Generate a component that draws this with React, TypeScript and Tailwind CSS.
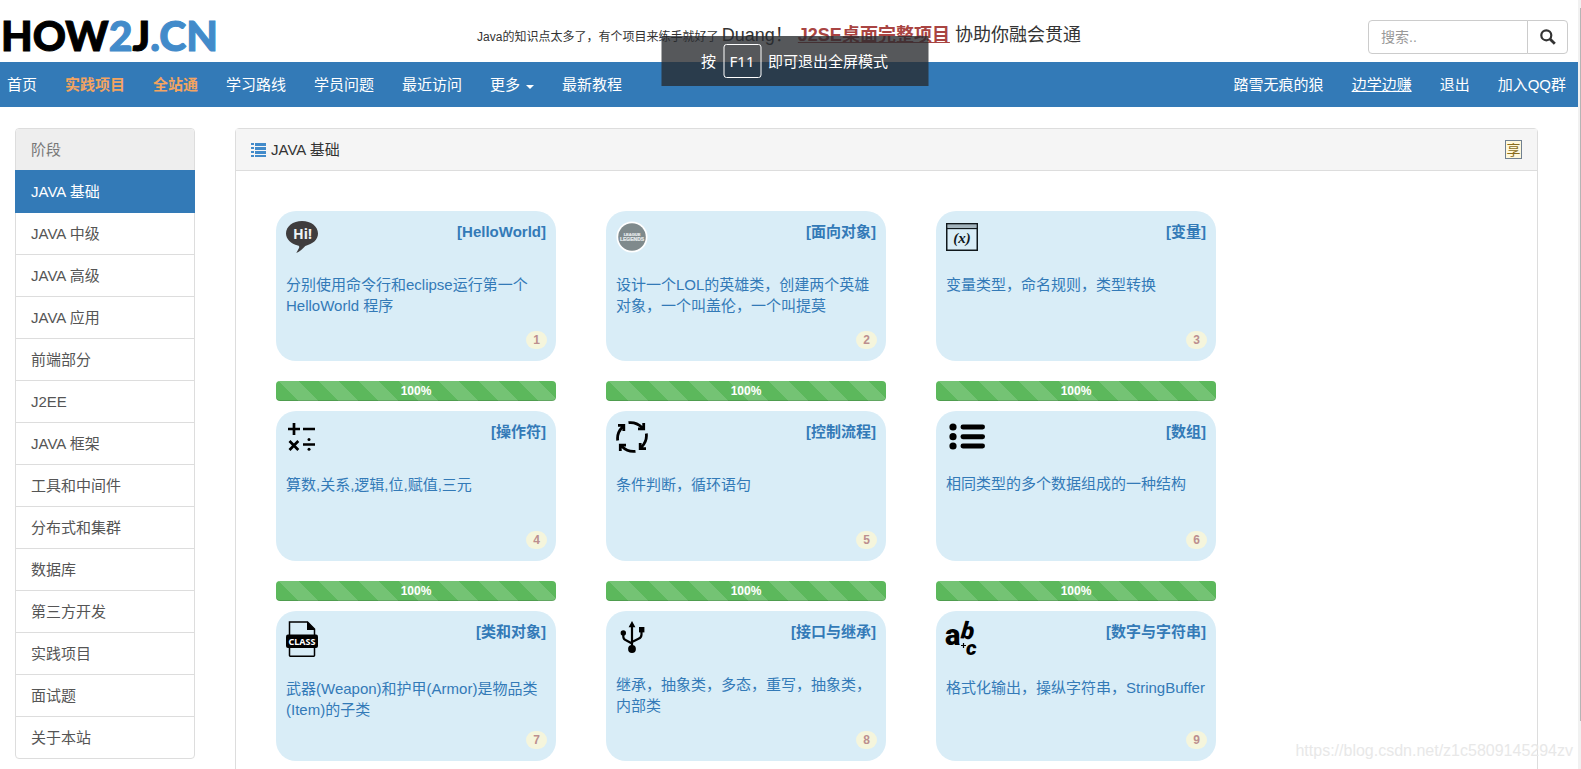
import React, { useState } from 'react';

// ============================================================================
// DATA
// ============================================================================
const stages = [
  'JAVA 基础',
  'JAVA 中级',
  'JAVA 高级',
  'JAVA 应用',
  '前端部分',
  'J2EE',
  'JAVA 框架',
  '工具和中间件',
  '分布式和集群',
  '数据库',
  '第三方开发',
  '实践项目',
  '面试题',
  '关于本站',
];

type NavLink = { label: string; className?: string; caret?: boolean };

const leftLinks: NavLink[] = [
  { label: '首页' },
  { label: '实践项目', className: 'font-bold text-[#f4a460]' },
  { label: '全站通', className: 'font-bold text-[#f4a460]' },
  { label: '学习路线' },
  { label: '学员问题' },
  { label: '最近访问' },
  { label: '更多', caret: true },
  { label: '最新教程' },
];

const rightLinks: NavLink[] = [
  { label: '踏雪无痕的狼' },
  { label: '边学边赚', className: 'text-white underline' },
  { label: '退出' },
  { label: '加入QQ群' },
];

// ============================================================================
// ICONS
// ============================================================================
const HelloIcon = () => (
  <svg width="32" height="32" viewBox="0 0 32 32">
    <path d="M16 0C7 0 0 5.400 0 12.600c0 5.600 5 10.400 11.800 11.900 1.400.3 1.800 1.200 1.200 2.600L10.300 32c3.500-1.700 6.500-4.200 9-7.100C26.600 23.400 32 18.700 32 12.600 32 5.400 25 0 16 0Z" fill="#3f3d3e" />
    <text x="16.500" y="18" textAnchor="middle" fill="#eef3f5" fontFamily="Noto Sans" fontWeight="700" fontSize="14">Hi!</text>
  </svg>
);

const LolIcon = () => (
  <svg width="32" height="32" viewBox="0 0 32 32">
    <circle cx="16" cy="16" r="15.500" fill="#fff" />
    <circle cx="16" cy="16" r="13.800" fill="#7f8a8c" />
    <text x="16" y="15" textAnchor="middle" fill="#e6ebec" stroke="#e6ebec" strokeWidth=".2" fontFamily="Liberation Sans" fontWeight="700" fontSize="4">LEAGUE</text>
    <text x="16" y="20" textAnchor="middle" fill="#e6ebec" stroke="#e6ebec" strokeWidth=".2" fontFamily="Liberation Sans" fontWeight="700" fontSize="5">LEGENDS</text>
  </svg>
);

const VariableIcon = () => (
  <svg width="32" height="32" viewBox="0 0 32 32">
    <rect x=".75" y="2.750" width="30.500" height="26.500" fill="none" stroke="#10181c" strokeWidth="1.500" />
    <path d="M1 7.500H31" stroke="#10181c" strokeWidth="1.300" />
    <path d="M1 5H31" stroke="#6d7b82" strokeWidth="3" opacity=".5" />
    <text x="16" y="21.500" textAnchor="middle" fill="#10181c" fontFamily="Liberation Serif" fontWeight="700" fontStyle="italic" fontSize="15">(x)</text>
  </svg>
);

const OperatorIcon = () => (
  <svg width="32" height="32" viewBox="0 0 32 32" fill="none" stroke="#000" strokeWidth="2.700">
    <path d="M2 8H14M8 2V14M17 8H29M3.500 20l8.800 9M12.300 20 3.500 29M17 23.500H29" />
    <circle cx="23" cy="18.500" r="1.500" fill="#000" stroke="none" />
    <circle cx="23" cy="28.300" r="1.500" fill="#000" stroke="none" />
  </svg>
);

const FlowIcon = () => (
  <svg width="32" height="32" viewBox="0 0 32 32" fill="none" stroke="#000" strokeWidth="2.800">
    {[0, 90, 180, 270].map((angle) => (
      <g key={angle} transform={`rotate(${angle} 16 16)`}>
        <path d="M12.500 1.700C18 1 22 2.500 26 6.500" />
        <path d="M22 7.800H27.700V2" />
        <path d="M23 8.500 28 3.500V8.500Z" fill="#000" stroke="none" />
      </g>
    ))}
  </svg>
);

const ArrayIcon = () => (
  <svg width="40" height="31" viewBox="0 0 40 31">
    {[6, 15.700, 25].map((y) => (
      <g key={y}>
        <circle cx="7" cy={y} r="3.600" />
        <rect x="14.500" y={y - 2.500} width="24.500" height="5" rx="2.400" />
      </g>
    ))}
  </svg>
);

const ClassIcon = () => (
  <svg width="32" height="36" viewBox="0 0 32 36">
    <path d="M3.500 16V1H21.500L28.500 8V16M3.500 25V34.500Q3.500 35.200 4.200 35.200H27.800Q28.500 35.200 28.500 34.500V25" fill="none" stroke="#000" strokeWidth="1.500" />
    <path d="M21 .5 29.200 9H21Z" />
    <rect x="0" y="13.500" width="32" height="13.500" rx="2" />
    <text x="16" y="23.500" textAnchor="middle" fill="#fff" fontFamily="Noto Sans" fontWeight="700" fontSize="9">CLASS</text>
  </svg>
);

const UsbIcon = () => (
  <svg width="32" height="32" viewBox="0 0 32 32">
    <path d="M16 3V27M7.300 12V15.500Q7.300 18.200 10 19.200L16 22.500M25.500 9V13.500Q25.500 16.500 22.500 17.800L16 21" fill="none" stroke="#000" strokeWidth="2.200" />
    <path d="M12.600 6.200 16 0 19.400 6.200Z" />
    <circle cx="16" cy="28" r="3.900" />
    <circle cx="7.300" cy="12" r="2.700" />
    <rect x="23" y="6" width="5.400" height="5.400" />
  </svg>
);

const StringIcon = () => (
  <svg width="32" height="35" viewBox="0 0 32 35" className="overflow-visible">
    <text x="-1" y="24" fontFamily="Roboto" fontWeight="900" fontSize="29">a</text>
    <text x="15" y="18" fontFamily="Roboto" fontWeight="900" fontStyle="italic" fontSize="24" transform="rotate(6 21 12)">b</text>
    <text x="20" y="34" fontFamily="Roboto" fontWeight="900" fontStyle="italic" fontSize="21">c</text>
    <path d="M17.500 22V27M15 24.500H20" stroke="#000" strokeWidth="1.200" />
  </svg>
);

const ListGlyph = () => (
  <svg width="15" height="14" viewBox="0 0 15 14" fill="#428bca" className="shrink-0">
    {[0, 4, 8, 12].map((y) => (
      <g key={y}>
        <rect x="0" y={y} width="3" height="2" />
        <rect x="4" y={y} width="11" height="3" />
      </g>
    ))}
  </svg>
);

const SearchGlyph = () => (
  <svg width="16" height="16" viewBox="0 0 16 16" fill="none" stroke="#333">
    <circle cx="6.300" cy="6.300" r="5" strokeWidth="2.200" />
    <path d="M10 10 14.800 14.800" strokeWidth="2.800" />
  </svg>
);

type Course = { title: string; desc: string; icon: React.FC; progress?: number };

const courses: Course[] = [
  { title: 'HelloWorld', desc: '分别使用命令行和eclipse运行第一个HelloWorld 程序', icon: HelloIcon, progress: 100 },
  { title: '面向对象', desc: '设计一个LOL的英雄类，创建两个英雄对象，一个叫盖伦，一个叫提莫', icon: LolIcon, progress: 100 },
  { title: '变量', desc: '变量类型，命名规则，类型转换', icon: VariableIcon, progress: 100 },
  { title: '操作符', desc: '算数,关系,逻辑,位,赋值,三元', icon: OperatorIcon, progress: 100 },
  { title: '控制流程', desc: '条件判断，循环语句', icon: FlowIcon, progress: 100 },
  { title: '数组', desc: '相同类型的多个数据组成的一种结构', icon: ArrayIcon, progress: 100 },
  { title: '类和对象', desc: '武器(Weapon)和护甲(Armor)是物品类(Item)的子类', icon: ClassIcon },
  { title: '接口与继承', desc: '继承，抽象类，多态，重写，抽象类，内部类', icon: UsbIcon },
  { title: '数字与字符串', desc: '格式化输出，操纵字符串，StringBuffer', icon: StringIcon },
];

// ============================================================================
// COMPONENTS
// ============================================================================
const Header = () => {
  const [keyword, setKeyword] = useState('');

  return (
    <header className="grid h-[62px] grid-cols-[1fr_auto_1fr] items-start">
      <a href="#" className="flex pt-3 pl-px font-[Lato] text-[41px] leading-[48px] font-black text-black [-webkit-text-stroke:1px]">
        HOW<span className="text-[#428bca]">2</span>J<span className="text-[#428bca]">.CN</span>
      </a>
      <p className="pt-5 pr-5 text-xs leading-[30px] text-[#333]">
        Java的知识点太多了，有个项目来练手就好了{' '}
        <span className="text-lg leading-[30px]">
          Duang！{' '}
          <a href="#" className="font-bold text-[#a94442] underline">J2SE桌面完整项目</a> 协助你融会贯通
        </span>
      </p>
      <form className="mt-5 mr-[10px] flex justify-self-end" onSubmit={(e) => e.preventDefault()}>
        <input
          type="text"
          aria-label="搜索"
          placeholder="搜索.."
          value={keyword}
          onChange={(e) => setKeyword(e.target.value)}
          className="h-[34px] w-40 rounded-l border border-[#ccc] px-3 text-sm outline-none placeholder:text-[#999]"
        />
        <button type="submit" aria-label="搜索" className="-ml-px flex h-[34px] w-[41px] items-center justify-center rounded-r border border-[#ccc] bg-white">
          <SearchGlyph />
        </button>
      </form>
    </header>
  );
};

const NavItems = ({ links }: { links: NavLink[] }) => (
  <ul className="flex gap-7">
    {links.map((link) => (
      <li key={link.label}>
        <a href="#" className={`flex items-center ${link.className ?? 'text-white'}`}>
          {link.label}
          {link.caret && <span className="mt-1 ml-[6px] border-x-4 border-t-4 border-x-transparent border-t-white" />}
        </a>
      </li>
    ))}
  </ul>
);

const Sidebar = () => (
  <nav className="w-[180px] shrink-0 self-start rounded border border-[#ddd]">
    <div className="rounded-t-[3px] bg-[#eee] px-[15px] py-[10px] text-[#777]">阶段</div>
    {stages.map((stage, i) => (
      <a
        key={stage}
        href="#"
        className={
          i === 0
            ? '-mx-px block border border-[#337ab7] bg-[#337ab7] px-[15px] py-[10px] text-white'
            : i === 1
              ? 'block px-[15px] py-[10px] text-[#555]'
              : 'block border-t border-[#ddd] px-[15px] py-[10px] text-[#555]'
        }
      >
        {stage}
      </a>
    ))}
  </nav>
);

const CourseCard = ({ index, title, desc, icon: Icon, progress }: Course & { index: number }) => (
  <div className="w-[280px]">
    <a href="#" className="relative block h-[150px] rounded-[20px] bg-[#d9edf7] p-[10px] text-[#337ab7]">
      <div className="flex items-start justify-between">
        <Icon />
        <span className="font-bold">[{title}]</span>
      </div>
      <p className="mt-[21px] break-words">{desc}</p>
      <span className="absolute right-[9px] bottom-3 flex h-[18px] min-w-[21px] items-center justify-center rounded-full bg-[#f5f5dc] text-xs font-bold text-[#bc8f8f]">
        {index}
      </span>
    </a>
    {progress !== undefined && (
      <div
        role="progressbar"
        aria-valuenow={progress}
        className="mt-5 mb-[10px] h-5 rounded bg-[#5cb85c] bg-[linear-gradient(45deg,rgba(255,255,255,.15)_25%,transparent_25%,transparent_50%,rgba(255,255,255,.15)_50%,rgba(255,255,255,.15)_75%,transparent_75%)] bg-[length:40px_40px] bg-[position:3px_0px] text-center text-xs leading-5 font-bold text-white shadow-[inset_0_-1px_0_rgba(0,0,0,.15)]"
      >
        {progress}%
      </div>
    )}
  </div>
);

const FullscreenHint = () => (
  <div className="absolute top-9 left-1/2 ml-1 flex h-[50px] w-[267px] -translate-x-1/2 items-center justify-center gap-[7px] bg-[rgba(41,43,47,.79)] text-white">
    按
    <kbd className="flex h-[34px] w-[38px] items-center justify-center rounded-[3px] border border-white font-['Noto_Sans'] text-[15px]">F11</kbd>
    即可退出全屏模式
  </div>
);

export default function App() {
  return (
    <div lang="zh-CN" className="relative flex h-screen overflow-hidden bg-white font-['Liberation_Sans','Noto_Sans_CJK_SC',sans-serif] text-[15px] leading-[21px] text-[#333]">
      <div className="min-w-0 flex-1 overflow-y-auto [scrollbar-width:none]">
        <Header />
        <nav className="flex h-[45px] items-center justify-between bg-[#337ab7] pr-3 pl-[7px]">
          <NavItems links={leftLinks} />
          <NavItems links={rightLinks} />
        </nav>

        <main className="flex gap-10 pt-[21px] pr-10 pb-5 pl-[15px]">
          <Sidebar />
          <section className="min-w-0 flex-1 rounded border border-[#ddd]">
            <div className="flex items-center gap-[5px] border-b border-[#ddd] bg-[#f5f5f5] px-[15px] py-[10px]">
              <ListGlyph />
              <h1>JAVA 基础</h1>
              <button type="button" className="ml-auto flex h-[19px] w-[17px] items-center justify-center border border-[#708090] bg-[#fff8dc] text-sm leading-4 text-[#8a6d1b]">
                享
              </button>
            </div>
            <div className="flex flex-wrap gap-x-[50px] p-10">
              {courses.map((course, i) => (
                <CourseCard key={course.title} index={i + 1} {...course} />
              ))}
            </div>
          </section>
        </main>
      </div>

      {/* thin scroll track on the right edge */}
      <div className="flex w-[3px] shrink-0 flex-col bg-[#f1f1f1] pt-2 pb-12">
        <div className="ml-auto w-px flex-1 bg-[#b5b5b5]" />
      </div>

      <FullscreenHint />
      <div className="pointer-events-none absolute right-2 bottom-[6px] text-base text-[#e8e8e8]">https://blog.csdn.net/z1c5809145294zv</div>
    </div>
  );
}
